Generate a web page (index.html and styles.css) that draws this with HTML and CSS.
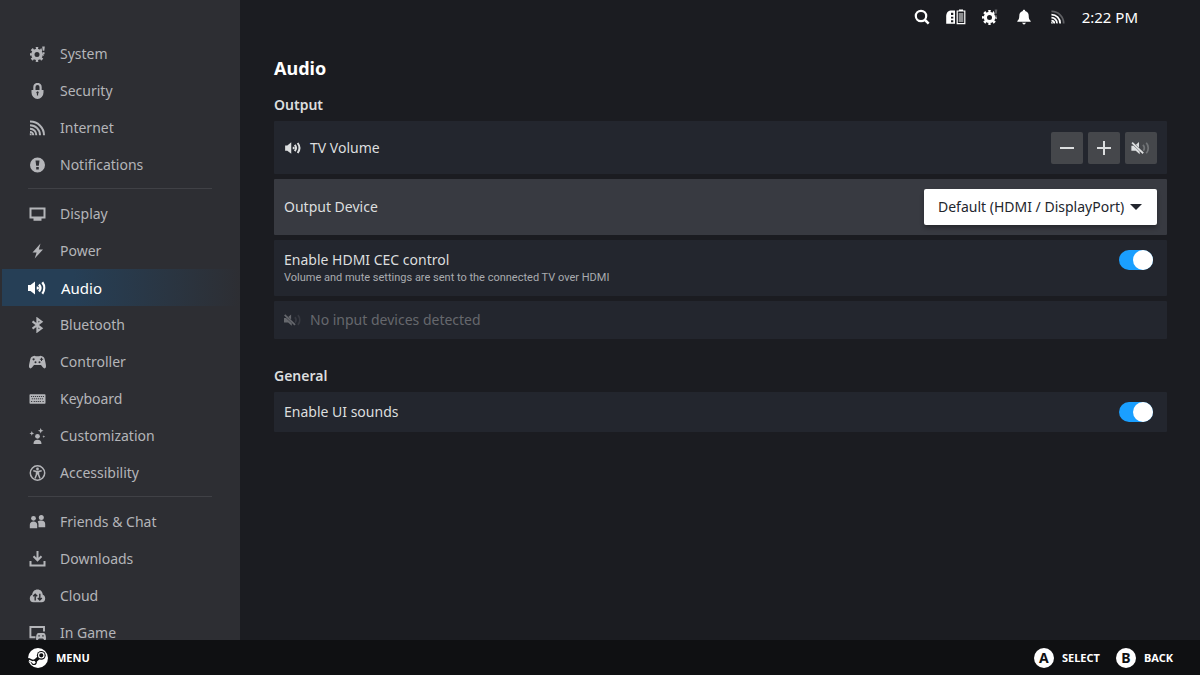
FILE: index.html
```html
<!DOCTYPE html>
<html lang="en">
<head>
    <meta charset="UTF-8">
    <meta name="viewport" content="width=device-width, initial-scale=1.0">
    <title>Settings - Audio</title>
    <link rel="stylesheet" href="styles.css">
</head>
<body>
    <!-- icon set -->
    <svg class="sprite" aria-hidden="true">
        <mask id="gear-cut">
            <rect width="16" height="16" fill="#fff"/>
            <path d="M11.500 0H16v8.500h-2.500z" fill="#000"/>
        </mask>
        <symbol id="i-gear" viewBox="0 0 16 16">
            <g mask="url(#gear-cut)" fill="none" stroke="currentColor">
                <circle cx="7.500" cy="8.400" r="4.100" stroke-width="3.200"/>
                <circle cx="7.500" cy="8.400" r="6.200" stroke-width="2.600" pathLength="16" stroke-dasharray="1 1" stroke-dashoffset="0.500"/>
            </g>
            <path class="faint" d="M12.700 .4h2.600l-.5 4.400h-1.600zM13 6.200h2v2h-2z" fill="currentColor"/>
        </symbol>
        <symbol id="i-lock" viewBox="0 0 16 16">
            <path d="M4.900 8V4a3.100 3.100 0 0 1 6.200 0V8" fill="none" stroke="currentColor" stroke-width="2.200"/>
            <path fill-rule="evenodd" d="M2 7h12v2.500a6 6.500 0 0 1-12 0zM6.800 9.600a1.200 1.200 0 0 0 .6 1V12.600h1.200v-2a1.200 1.200 0 1 0-1.800-1z" fill="currentColor"/>
        </symbol>
        <symbol id="i-net" viewBox="0 0 16 16">
            <g fill="none" stroke="currentColor" stroke-width="2">
                <path d="M.5 8.700a6.300 6.300 0 0 1 6.300 6.600M.5 12a3.300 3.300 0 0 1 3.300 3.300"/>
                <path d="M.5 5.200a10 10 0 0 1 10 10.100"/>
                <path class="faint" d="M.5 1.600a13.700 13.700 0 0 1 14 13.700"/>
            </g>
            <path d="M.3 13.300a2 2 0 0 1 2 2h-2z" fill="currentColor"/>
        </symbol>
        <symbol id="i-alert" viewBox="0 0 16 16">
            <path fill-rule="evenodd" d="M8 .5a7.500 7.500 0 1 0 0 15A7.500 7.500 0 0 0 8 .5zM6 3.500h4l-.7 5.200H6.700zM6.700 10h2.600v2.500H6.700z" fill="currentColor"/>
        </symbol>
        <symbol id="i-display" viewBox="0 0 16 16">
            <path fill-rule="evenodd" d="M0 1.500h16v11h-4v2.300H4v-2.300H0zM2 3.500v7h12v-7z" fill="currentColor"/>
        </symbol>
        <symbol id="i-power" viewBox="0 0 16 16">
            <path d="M11 .6L3 9.400h4.100L5.200 15.500 13.500 6.500H9.300z" fill="currentColor"/>
        </symbol>
        <symbol id="i-volume" viewBox="0 0 18 16">
            <path d="M0 5h2.500L7 1.500v13L2.500 11H0z" fill="currentColor"/>
            <path d="M8.700 6.500h.8a1.500 1.500 0 0 1 0 3h-.8z" fill="currentColor"/>
            <path d="M11 4.500a5.500 5.500 0 0 1 0 7M14.300 2.300a9.500 9.500 0 0 1 0 11.400" fill="none" stroke="currentColor" stroke-width="2.300"/>
        </symbol>
        <symbol id="i-mute" viewBox="0 0 22 16">
            <path d="M0 5.500h2.500l7 6.500v3L5 11H0zM5.200 4.300L8.700 1.200v6.200z" fill="currentColor"/>
            <path d="M.8 1.800L13.500 14" stroke="currentColor" stroke-width="2"/>
            <path d="M13.300 4.500a5.500 5.500 0 0 1 .4 6.700M17 2a9 9 0 0 1 0 12" fill="none" stroke="currentColor" stroke-width="2" opacity=".3"/>
        </symbol>
        <symbol id="i-bluetooth" viewBox="0 0 16 16">
            <path d="M3 4.300l9 7L7.900 14.300V1.700L12 4.700l-9 7" fill="none" stroke="currentColor" stroke-width="2.100"/>
        </symbol>
        <symbol id="i-pad" viewBox="0 0 18 16">
            <path fill-rule="evenodd" d="M4.500 2.300c.8-.7 2.200-.7 2.800 0h3.400c.6-.7 2-.7 2.800 0 1.800.3 2.500 1.800 3 4.200.7 3.200 1.400 5.700.8 7.100-.6 1.200-2.100 1-3-.3l-1.800-2.400h-7l-1.800 2.400c-.9 1.300-2.400 1.500-3 .3-.6-1.400.1-3.900.8-7.100.5-2.400 1.200-3.900 3-4.200zM4 5.300a1.100 1.100 0 1 0 2.200 0 1.100 1.100 0 1 0-2.200 0zM6 8.300a1 1 0 1 0 2 0 1 1 0 1 0-2 0zM10 8.300a1 1 0 1 0 2 0 1 1 0 1 0-2 0zM12.500 3.700h1v1.100h1.100v1h-1.100v1.100h-1V5.800h-1.100v-1h1.100z" fill="currentColor"/>
        </symbol>
        <symbol id="i-keyboard" viewBox="0 0 16 16">
            <rect y="3.200" width="16" height="9.500" rx=".7" fill="currentColor"/>
            <path class="cut" d="M1.500 5.500h13M2.300 7.800h12M1.500 10.500h1.500M4.200 10.500h7.500M13 10.500h1.500" fill="none" stroke-width=".9" stroke-dasharray="1.200 .8"/>
        </symbol>
        <symbol id="i-custom" viewBox="0 0 16 16">
            <circle cx="8" cy="8.300" r="2.400" fill="currentColor"/>
            <path d="M4 16c0-3 1.500-4.200 4-4.200s4 1.200 4 4.200zM11.200 0l.8 2 2 .8-2 .8-.8 2-.8-2-2-.8 2-.8zM2.300 3l.7 1.700 1.700.7-1.700.7-.7 1.700-.7-1.700-1.700-.7 1.700-.7zM14.300 7.300l.4 1 1 .4-1 .4-.4 1-.4-1-1-.4 1-.4z" fill="currentColor"/>
        </symbol>
        <symbol id="i-access" viewBox="0 0 16 16">
            <circle cx="8" cy="8" r="7.200" fill="none" stroke="currentColor" stroke-width="1.500"/>
            <circle cx="8" cy="4" r="1.400" fill="currentColor"/>
            <path d="M3.800 5.800L7 6.500h2l3.200-.7M8 6.500v3M7 6.500v3l-1.500 4M9 6.500v3l1.500 4" fill="none" stroke="currentColor" stroke-width="1.500"/>
        </symbol>
        <symbol id="i-friends" viewBox="0 0 16 16">
            <circle cx="4" cy="4.300" r="2.400" fill="currentColor"/>
            <circle cx="11.800" cy="3.500" r="2.500" fill="currentColor"/>
            <path d="M.3 14.300V11c0-2.300 1.400-3.500 3.700-3.500S7.700 8.700 7.700 11v3.300zM9 13.300V10c0-1-.3-1.700-.8-2.300.9-.8 2-1.100 3.600-1.100 2.500 0 3.900 1.200 3.900 3.400v3.300z" fill="currentColor"/>
        </symbol>
        <symbol id="i-download" viewBox="0 0 16 16">
            <path d="M8 0v9M4 5.300l4 4 4-4M1 10v4.500h14V10" fill="none" stroke="currentColor" stroke-width="2"/>
        </symbol>
        <symbol id="i-cloud" viewBox="0 0 16 16">
            <path d="M4 14.300C1.500 14.300.3 12.500.3 10.500c0-1.800 1-3.200 2.400-3.700C2.900 3.700 5 1.500 8 1.500s5.100 2.200 5.300 5.300c1.400.5 2.400 1.900 2.400 3.700 0 2-1.200 3.800-3.700 3.800z" fill="currentColor"/>
            <path class="cut" d="M5.700 12.500V6.300M3.700 8.300l2-2 2 2M10.300 5.800v6.200M8.300 10l2 2 2-2" fill="none" stroke-width="1.400"/>
        </symbol>
        <symbol id="i-game" viewBox="0 0 18 16">
            <path d="M7 12.300H1.900V2h13.600v4.500" fill="none" stroke="currentColor" stroke-width="1.900"/>
            <path fill-rule="evenodd" d="M10 8h5c1.500 0 2 1.300 2.300 3.300.3 2 .3 4-.8 4s-1.300-1.800-2.300-1.800h-3.400c-1 0-1.200 1.800-2.300 1.800s-1.100-2-.8-4C8 9.300 8.500 8 10 8zM9.800 10.300h1.500v1.200H9.800zM13.700 10.300h1.500v1.200h-1.500z" fill="currentColor"/>
        </symbol>
        <symbol id="i-search" viewBox="0 0 16 16">
            <circle cx="7" cy="7" r="5.200" fill="none" stroke="currentColor" stroke-width="2.200"/>
            <path d="M10.500 10.500l4.200 4.200" stroke="currentColor" stroke-width="2.500"/>
        </symbol>
        <symbol id="i-battery" viewBox="0 0 20 16">
            <path fill-rule="evenodd" d="M4.500 1.500H9v13.200H.2V8C.2 4.500 1.500 1.800 4.500 1.500zM5 3.700h2.300v2.300H5zM5 7.700h2.300v1.900H5zM5 11.300h2.300v1.900H5z" fill="currentColor"/>
            <path d="M11.200 2h7.600v12.600h-7.600zM13 1h4" fill="none" stroke="currentColor" stroke-width="1.200"/>
            <path d="M12.700 4h4.600v9h-4.600z" fill="currentColor" opacity=".5"/>
        </symbol>
        <symbol id="i-bell" viewBox="0 0 16 16">
            <path d="M8 .8c.8 0 1.200.5 1.200 1.200 2.300.5 3.500 2.500 3.500 4.700 0 2.800.6 4 2 5.300v.8H1.300V12c1.400-1.300 2-2.500 2-5.300 0-2.200 1.200-4.200 3.500-4.700 0-.7.400-1.200 1.200-1.200zM5.800 13.700h4.400L8 15.700z" fill="currentColor"/>
        </symbol>
        <symbol id="i-steam" viewBox="0 0 20 20">
            <circle cx="10" cy="10" r="10" fill="#fff"/>
            <path d="M-.2 11.300l6 2.600M6 14l5.500-5" stroke="#0f1012" stroke-width="3.200"/>
            <circle cx="6" cy="14.300" r="2.800" fill="#0f1012"/>
            <path d="M1 12.500l4.600 1.900" stroke="#fff" stroke-width="1.400"/>
            <circle cx="5.800" cy="14.300" r="1.600" fill="#fff"/>
            <circle cx="13.300" cy="7.300" r="4.400" fill="#0f1012"/>
            <circle cx="13.300" cy="7.300" r="2.700" fill="none" stroke="#fff" stroke-width="1.200"/>
        </symbol>
    </svg>

    <div class="layout">
        <nav class="sidebar">
            <ul>
                <li><a href="#"><svg><use href="#i-gear"/></svg>System</a></li>
                <li><a href="#"><svg><use href="#i-lock"/></svg>Security</a></li>
                <li><a href="#"><svg><use href="#i-net"/></svg>Internet</a></li>
                <li><a href="#"><svg><use href="#i-alert"/></svg>Notifications</a></li>
            </ul>
            <ul>
                <li><a href="#"><svg><use href="#i-display"/></svg>Display</a></li>
                <li><a href="#"><svg><use href="#i-power"/></svg>Power</a></li>
                <li><a href="#" class="active" aria-current="page"><svg><use href="#i-volume"/></svg>Audio</a></li>
                <li><a href="#"><svg><use href="#i-bluetooth"/></svg>Bluetooth</a></li>
                <li><a href="#"><svg><use href="#i-pad"/></svg>Controller</a></li>
                <li><a href="#"><svg><use href="#i-keyboard"/></svg>Keyboard</a></li>
                <li><a href="#"><svg><use href="#i-custom"/></svg>Customization</a></li>
                <li><a href="#"><svg><use href="#i-access"/></svg>Accessibility</a></li>
            </ul>
            <ul>
                <li><a href="#"><svg><use href="#i-friends"/></svg>Friends &amp; Chat</a></li>
                <li><a href="#"><svg><use href="#i-download"/></svg>Downloads</a></li>
                <li><a href="#"><svg><use href="#i-cloud"/></svg>Cloud</a></li>
                <li><a href="#"><svg><use href="#i-game"/></svg>In Game</a></li>
            </ul>
        </nav>

        <div class="content">
            <header class="topbar">
                <button aria-label="Search"><svg><use href="#i-search"/></svg></button>
                <button aria-label="Battery"><svg class="wide"><use href="#i-battery"/></svg></button>
                <button aria-label="Settings"><svg><use href="#i-gear"/></svg></button>
                <button aria-label="Notifications"><svg><use href="#i-bell"/></svg></button>
                <button aria-label="Network"><svg class="small"><use href="#i-net"/></svg></button>
                <time>2:22 PM</time>
            </header>

            <main>
                <h1>Audio</h1>

                <section>
                    <h2>Output</h2>
                    <div class="row volume">
                        <svg class="icon"><use href="#i-volume"/></svg>
                        <span class="label">TV Volume</span>
                        <div class="buttons">
                            <button aria-label="Volume down"><svg viewBox="0 0 14 14"><path d="M0 7h14" stroke="currentColor" stroke-width="2"/></svg></button>
                            <button aria-label="Volume up"><svg viewBox="0 0 14 14"><path d="M0 7h14M7 0v14" stroke="currentColor" stroke-width="2"/></svg></button>
                            <button aria-label="Mute"><svg class="mute"><use href="#i-mute"/></svg></button>
                        </div>
                    </div>
                    <div class="row focused">
                        <label class="label" for="device">Output Device</label>
                        <div class="dropdown">
                            <select id="device">
                                <option>Default (HDMI / DisplayPort)</option>
                            </select>
                            <svg viewBox="0 0 12 6"><path d="M0 0h12L6 6z" fill="#23262e"/></svg>
                        </div>
                    </div>
                    <div class="row toggle-row">
                        <label class="label" for="cec">Enable HDMI CEC control
                            <small>Volume and mute settings are sent to the connected TV over HDMI</small>
                        </label>
                        <input type="checkbox" class="toggle" id="cec" checked>
                    </div>
                    <div class="row disabled">
                        <svg class="icon"><use href="#i-mute"/></svg>
                        <span class="label">No input devices detected</span>
                    </div>
                </section>

                <section>
                    <h2>General</h2>
                    <div class="row toggle-row">
                        <label class="label" for="sounds">Enable UI sounds</label>
                        <input type="checkbox" class="toggle" id="sounds" checked>
                    </div>
                </section>
            </main>
        </div>
    </div>

    <footer>
        <button class="menu"><svg><use href="#i-steam"/></svg>MENU</button>
        <div class="hints">
            <button><span class="key">A</span>SELECT</button>
            <button><span class="key">B</span>BACK</button>
        </div>
    </footer>
</body>
</html>
```
FILE: styles.css
```css
*{
    box-sizing: border-box;
}
body{
    margin: 0;
    height: 100vh;
    display: flex;
    flex-direction: column;
    background-color: #1b1c21;
    color: #dcdedf;
    font-family: "Noto Sans", "Open Sans", sans-serif;
    font-size: 14px;
    line-height: 20px;
}
.sprite{
    position: absolute;
    width: 0;
    height: 0;
}
button{
    padding: 0;
    border: 0;
    background: none;
    color: inherit;
    font: inherit;
    cursor: pointer;
}
.layout{
    flex: 1;
    min-height: 0;
    display: flex;
}

/* left menu */
.sidebar{
    width: 240px;
    flex-shrink: 0;
    padding-top: 35px;
    overflow-y: auto;
    scrollbar-width: none;
    background-color: #2d2e33;
}
.sidebar ul{
    list-style: none;
    margin: 0;
    padding: 0;
}
.sidebar ul + ul::before{
    content: "";
    display: block;
    height: 1px;
    margin: 5px 28px 6px;
    background-color: #404146;
}
.sidebar a{
    display: flex;
    align-items: center;
    height: 37px;
    margin-left: 2px;
    padding-left: 26px;
    gap: 13px;
    color: #b4b5b9;
    text-decoration: none;
}
.sidebar svg{
    width: 19px;
    height: 16px;
}
.sidebar a.active{
    padding-left: 25px;
    gap: 14px;
    color: #fff;
    font-size: 15px;
    background: linear-gradient(to right, #263f56 30%, #2d2e33);
}
.sidebar .active svg{
    width: 20px;
}
.cut{
    stroke: #2d2e33;
}

/* right side */
.content{
    flex: 1;
    min-width: 0;
    overflow-y: auto;
}
.topbar{
    --faint: 0.3;
    display: flex;
    justify-content: flex-end;
    align-items: center;
    gap: 14px;
    height: 34px;
    padding-right: 62px;
    color: #fff;
    font-size: 15px;
}
.faint{
    opacity: var(--faint, 1);
}
.topbar button{
    width: 20px;
    height: 20px;
    display: flex;
    align-items: center;
    justify-content: center;
}
.topbar svg{
    width: 16px;
    height: 16px;
}
.topbar .wide{
    width: 20px;
}
.topbar .small{
    width: 14px;
    height: 14px;
}
main{
    padding: 22px 33px 20px 34px;
}
h1{
    margin: 0 0 14px;
    font-size: 18px;
    line-height: 24px;
    color: #fff;
}
h2{
    margin: 0;
    font-size: 14px;
    font-weight: 600;
    line-height: 22px;
}
section{
    display: flex;
    flex-direction: column;
    gap: 5px;
    margin-bottom: 26px;
}
.row{
    display: flex;
    align-items: center;
    min-height: 38px;
    padding: 10px;
    border-radius: 1px;
    background-color: #23262e;
}
.volume{
    min-height: 53px;
}
.label{
    flex: 1;
}
.icon{
    width: 18px;
    height: 14px;
    margin-right: 8px;
}
.buttons{
    display: flex;
    gap: 5px;
}
.buttons button{
    display: flex;
    align-items: center;
    justify-content: center;
    width: 32px;
    height: 32px;
    border-radius: 2px;
    background-color: #45474b;
}
.buttons svg{
    width: 14px;
    height: 14px;
}
.buttons .mute{
    width: 22px;
    height: 14px;
}
.focused{
    background-color: #383a41;
}
.dropdown{
    position: relative;
}
.dropdown select{
    appearance: none;
    width: 233px;
    height: 36px;
    padding: 0 28px 0 14px;
    border: 0;
    border-radius: 2px;
    background-color: #fff;
    box-shadow: 0 3px 4px rgba(0, 0, 0, 0.3);
    color: #23262e;
    font: inherit;
}
.dropdown svg{
    position: absolute;
    top: 15px;
    right: 15px;
    width: 12px;
    height: 6px;
    pointer-events: none;
}
.toggle-row{
    align-items: flex-start;
    padding-right: 14px;
}
.label small{
    display: block;
    font-family: Roboto, "Noto Sans", sans-serif;
    font-size: 11px;
    line-height: 16px;
    color: #a9abaf;
}
.toggle{
    appearance: none;
    display: flex;
    justify-content: flex-end;
    width: 34px;
    height: 20px;
    margin: 0;
    border-radius: 10px;
    background-color: #1a9fff;
}
.toggle::before{
    content: "";
    width: 20px;
    height: 20px;
    border-radius: 50%;
    background-color: #fff;
}
.toggle:not(:checked){
    justify-content: flex-start;
    background-color: #45474b;
}
.disabled{
    padding: 9px 10px;
    color: #66686d;
}

/* bottom bar */
footer{
    display: flex;
    align-items: center;
    justify-content: space-between;
    height: 35px;
    padding: 0 27px 0 28px;
    background-color: #0f1012;
    color: #fff;
    font-size: 11px;
    font-weight: 700;
}
footer button{
    display: flex;
    align-items: center;
    gap: 8px;
}
footer svg{
    width: 20px;
    height: 20px;
}
.hints{
    display: flex;
    gap: 16px;
}
.key{
    width: 20px;
    height: 20px;
    border-radius: 50%;
    background-color: #fff;
    color: #0f1012;
    font-size: 14px;
    line-height: 20px;
}
```
